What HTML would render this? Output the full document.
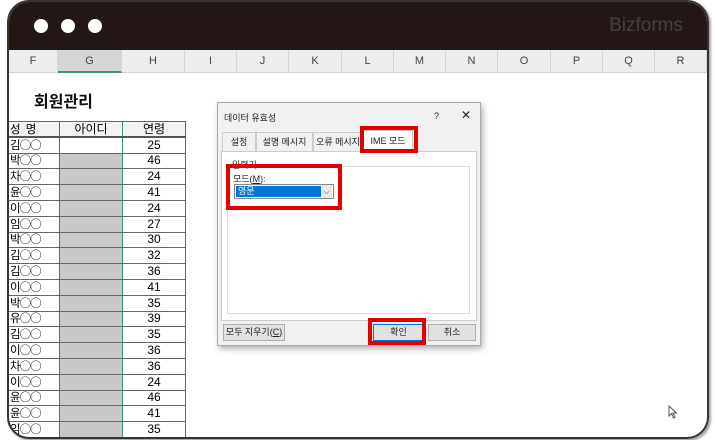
<!DOCTYPE html><html><head><meta charset="utf-8"><style>
*{margin:0;padding:0;box-sizing:border-box}
body{width:715px;height:440px;background:#fff;position:relative;overflow:hidden;font-family:"Liberation Sans","Noto Sans CJK KR",sans-serif}
.frame{position:absolute;left:7px;top:0;width:702px;height:439px;border:2px solid #3a3230;border-radius:22px;overflow:hidden;box-shadow:2px 2px 2px rgba(0,0,0,.35)}
.tb{position:absolute;left:0;top:0;right:0;height:48px;background:#231815}
.dot{position:absolute;top:17px;width:14px;height:14px;border-radius:50%;background:#fff}
.brand{position:absolute;right:24px;top:13px;color:#4a403d;font-size:19px}
.ch{position:absolute;top:48px;left:0;right:0;height:23px;background:#ededed;border-bottom:1px solid #d4d4d4}
.ch div{position:absolute;top:0;height:23px;line-height:23px;text-align:center;font-size:11px;color:#444;border-right:1px solid #d4d4d4}
.title{position:absolute;left:25px;top:86px;font-size:16px;font-weight:bold;color:#111}
table{position:absolute;left:-1px;top:119px;border-collapse:collapse;font-size:12px}
td{height:15.8px;border:1px solid #666;padding:0;line-height:13px}
td.a{width:51px;text-align:left;padding-left:1px;font-family:"Noto Sans CJK KR",sans-serif;font-size:11.5px;letter-spacing:-1px;line-height:13px}
td.b{width:63px;border-left:1.5px solid #3a9a6a;border-right:1.5px solid #3a9a6a}
td.g{background:#c8c8c8}
td.c{width:63px;text-align:center}
tr.h td{background:#f2f2f2;text-align:center;border-bottom:2px solid #555}
.dlg{position:absolute;left:217px;top:102px;width:264px;height:244px;background:#f0f0f0;border:1px solid #aaa;box-shadow:2px 3px 6px rgba(0,0,0,.3);font-size:9px;color:#222}
.red{position:absolute;border:4px solid #e00000}
.btn{position:absolute;height:17px;border:1px solid #adadad;background:#e1e1e1;text-align:center;line-height:15px;font-size:9px}
</style></head><body>
<div class="frame">
<div class="tb"><div class="dot" style="left:25px"></div><div class="dot" style="left:52px"></div><div class="dot" style="left:79px"></div><div class="brand">Bizforms</div></div>
<div class="ch">
<div style="left:0;width:49px">F</div>
<div style="left:49px;width:64px;background:#d6d6d6;border-bottom:2px solid #3a9a6a">G</div>
<div style="left:113px;width:63px">H</div>
<div style="left:176px;width:52px">I</div>
<div style="left:228px;width:52px">J</div>
<div style="left:280px;width:53px">K</div>
<div style="left:333px;width:52px">L</div>
<div style="left:385px;width:52px">M</div>
<div style="left:437px;width:52px">N</div>
<div style="left:489px;width:53px">O</div>
<div style="left:542px;width:52px">P</div>
<div style="left:594px;width:52px">Q</div>
<div style="left:646px;width:52px">R</div>
</div>
<div class="title">회원관리</div>
<table>
<tr class="h"><td class="a" style="text-align:left;letter-spacing:0">성&nbsp;&nbsp;명</td><td class="b" style="background:#f2f2f2">아이디</td><td class="c">연령</td></tr>
<tr><td class="a">김○○</td><td class="b"></td><td class="c">25</td></tr>
<tr><td class="a">박○○</td><td class="b g"></td><td class="c">46</td></tr>
<tr><td class="a">차○○</td><td class="b g"></td><td class="c">24</td></tr>
<tr><td class="a">윤○○</td><td class="b g"></td><td class="c">41</td></tr>
<tr><td class="a">이○○</td><td class="b g"></td><td class="c">24</td></tr>
<tr><td class="a">임○○</td><td class="b g"></td><td class="c">27</td></tr>
<tr><td class="a">박○○</td><td class="b g"></td><td class="c">30</td></tr>
<tr><td class="a">김○○</td><td class="b g"></td><td class="c">32</td></tr>
<tr><td class="a">김○○</td><td class="b g"></td><td class="c">36</td></tr>
<tr><td class="a">이○○</td><td class="b g"></td><td class="c">41</td></tr>
<tr><td class="a">박○○</td><td class="b g"></td><td class="c">35</td></tr>
<tr><td class="a">유○○</td><td class="b g"></td><td class="c">39</td></tr>
<tr><td class="a">김○○</td><td class="b g"></td><td class="c">35</td></tr>
<tr><td class="a">이○○</td><td class="b g"></td><td class="c">36</td></tr>
<tr><td class="a">차○○</td><td class="b g"></td><td class="c">36</td></tr>
<tr><td class="a">이○○</td><td class="b g"></td><td class="c">24</td></tr>
<tr><td class="a">윤○○</td><td class="b g"></td><td class="c">46</td></tr>
<tr><td class="a">윤○○</td><td class="b g"></td><td class="c">41</td></tr>
<tr><td class="a">임○○</td><td class="b g"></td><td class="c">35</td></tr>
</table>
</div>
<svg style="position:absolute;left:668px;top:405px" width="10" height="14" viewBox="0 0 10 14"><path d="M1 1 L1 11 L3.5 8.5 L5.5 13 L7 12.3 L5 8 L8.5 8 Z" fill="#fff" stroke="#555" stroke-width="1"/></svg>
<div class="dlg">
<div style="position:absolute;left:6px;top:8px">데이터 유효성</div>
<div style="position:absolute;left:216px;top:8px">?</div>
<div style="position:absolute;left:243px;top:5px;font-size:12px">✕</div>
<div style="position:absolute;left:3px;top:48px;width:256px;height:170px;background:#fff;border:1px solid #ccc"></div>
<div style="position:absolute;left:4px;top:29px;width:34px;height:19px;text-align:center;line-height:19px;border:1px solid #ccc;border-bottom:none">설정</div>
<div style="position:absolute;left:38px;top:29px;width:57px;height:19px;text-align:center;line-height:19px;border:1px solid #ccc;border-bottom:none">설명 메시지</div>
<div style="position:absolute;left:95px;top:29px;width:50px;height:19px;text-align:center;line-height:19px;border:1px solid #ccc;border-bottom:none">오류 메시지</div>
<div style="position:absolute;left:145px;top:27px;width:50px;height:22px;text-align:center;line-height:20px;background:#fff;border:1px solid #ccc;border-bottom:none">IME 모드</div>
<div style="position:absolute;left:9px;top:63px;width:243px;height:148px;border:1px solid #ddd"></div>
<div style="position:absolute;left:12px;top:55px;background:#fff;padding:0 2px">입력기</div>
<div style="position:absolute;left:15px;top:69px">모드(<u>M</u>):</div>
<div style="position:absolute;left:16px;top:81px;width:100px;height:15px;border:1px solid #888;background:#fff"><div style="position:absolute;left:1px;top:1px;width:85px;height:11px;background:#0078d7;color:#fff;line-height:11px;padding-left:2px">영문</div><div style="position:absolute;right:1px;top:0;width:11px;height:13px;background:#e8e8e8;font-size:8px;text-align:center;line-height:13px;color:#555">⌵</div></div>
<div class="btn" style="left:5px;top:221px;width:62px">모두 지우기(<u>C</u>)</div>
<div class="btn" style="left:155px;top:221px;width:51px;border-color:#0078d7">확인</div>
<div class="btn" style="left:210px;top:221px;width:48px">취소</div>
</div>
<div class="red" style="left:360px;top:126px;width:58px;height:27px"></div>
<div class="red" style="left:226px;top:164px;width:116px;height:46px"></div>
<div class="red" style="left:368px;top:318px;width:58px;height:27px"></div>
</body></html>
